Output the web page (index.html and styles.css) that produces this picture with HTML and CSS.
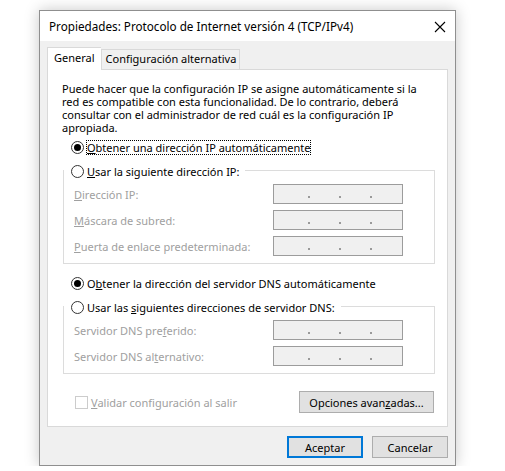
FILE: index.html
```html
<!DOCTYPE html>
<html lang="es">
<head>
    <meta charset="UTF-8">
    <title>Propiedades: Protocolo de Internet versión 4 (TCP/IPv4)</title>
    <link rel="stylesheet" href="styles.css">
</head>
<body>

<div class="window">
    <div class="titlebar">
        <span class="title">Propiedades: Protocolo de Internet versión 4 (TCP/IPv4)</span>
        <svg class="close" width="12" height="12" viewBox="0 0 12 12">
            <path d="M1 1L11 11M11 1L1 11" stroke="#000" stroke-width="1.1" fill="none"/>
        </svg>
    </div>

    <div class="body">
        <div class="tabs">
            <div class="tab active">General</div>
            <div class="tab">Configuración alternativa</div>
        </div>

        <div class="panel">
            <p class="intro">Puede hacer que la configuración IP se asigne automáticamente si la red es compatible con esta funcionalidad. De lo contrario, deberá consultar con el administrador de red cuál es la configuración IP apropiada.</p>

            <div class="option first">
                <span class="radio checked"></span>
                <span class="focus"><u>O</u>btener una dirección IP automáticamente</span>
            </div>

            <div class="group">
                <div class="option group-title">
                    <span class="radio"></span>
                    <span><u>U</u>sar la siguiente dirección IP:</span>
                </div>
                <div class="field-row">
                    <span class="label"><u>D</u>irección IP:</span>
                    <span class="ip"><i></i><i></i><i></i></span>
                </div>
                <div class="field-row">
                    <span class="label"><u>M</u>áscara de subred:</span>
                    <span class="ip"><i></i><i></i><i></i></span>
                </div>
                <div class="field-row">
                    <span class="label"><u>P</u>uerta de enlace predeterminada:</span>
                    <span class="ip"><i></i><i></i><i></i></span>
                </div>
            </div>

            <div class="option dns-auto">
                <span class="radio checked"></span>
                <span>O<u>b</u>tener la dirección del servidor DNS automáticamente</span>
            </div>

            <div class="group">
                <div class="option group-title">
                    <span class="radio"></span>
                    <span>Usar las <u>s</u>iguientes direcciones de servidor DNS:</span>
                </div>
                <div class="field-row">
                    <span class="label">Servidor DNS pre<u>f</u>erido:</span>
                    <span class="ip"><i></i><i></i><i></i></span>
                </div>
                <div class="field-row">
                    <span class="label">Servidor DNS al<u>t</u>ernativo:</span>
                    <span class="ip"><i></i><i></i><i></i></span>
                </div>
            </div>

            <div class="bottom-row">
                <div class="check">
                    <span class="box"></span>
                    <span><u>V</u>alidar configuración al salir</span>
                </div>
                <button class="btn advanced">Opciones avan<u>z</u>adas...</button>
            </div>
        </div>

        <div class="footer">
            <button class="btn default">Aceptar</button>
            <button class="btn">Cancelar</button>
        </div>
    </div>
</div>

</body>
</html>
```

FILE: styles.css
```css
body {
    margin: 0;
    padding: 10px 0 0 39px;
    background-color: #ffffff;
    font-family: "Noto Sans", sans-serif;
    font-size: 11px;
    color: #000000;
}

.window {
    width: 415px;
    height: 454px;
    border: 1px solid #8f8f8f;
    box-shadow: 0 0 14px rgba(0, 0, 0, 0.22);
    background-color: #f0f0f0;
    display: flex;
    flex-direction: column;
}

.titlebar {
    height: 30px;
    background-color: #ffffff;
    display: flex;
    align-items: center;
    justify-content: space-between;
    padding: 0 9px 0 9px;
}

.title {
    font-size: 11.7px;
}

.close {
    margin-top: 1px;
}

.body {
    flex: 1;
    padding: 7px 7px 0 7px;
    display: flex;
    flex-direction: column;
}

.tabs {
    display: flex;
    align-items: flex-end;
    height: 21px;
}

.tab {
    height: 19px;
    line-height: 18px;
    padding: 0 3px 0 4px;
    border: 1px solid #d9d9d9;
    border-bottom: none;
    background-color: #f0f0f0;
}

.tab.active {
    position: relative;
    z-index: 1;
    height: 22px;
    line-height: 20px;
    padding: 0 6px 0 6px;
    margin-bottom: -1px;
    background-color: #ffffff;
    border-right: none;
}

.panel {
    background-color: #ffffff;
    border: 1px solid #d9d9d9;
    padding: 12px 12px 12px 14px;
    height: 358px;
    box-sizing: border-box;
}

.intro {
    margin: 0;
    line-height: 13px;
}

.option {
    display: flex;
    align-items: center;
    height: 16px;
    padding-left: 9px;
}

.option.first {
    margin-top: 5px;
}

.focus {
    outline: 1px dotted #000000;
    outline-offset: 0;
    line-height: 13px;
}

.radio {
    width: 11px;
    height: 11px;
    border: 1px solid #333333;
    border-radius: 50%;
    margin-right: 3px;
    display: flex;
    align-items: center;
    justify-content: center;
    background-color: #ffffff;
}

.radio.checked::after {
    content: "";
    width: 7px;
    height: 7px;
    border-radius: 50%;
    background-color: #000000;
}

.group {
    margin: 15px 0 0 1px;
    border: 1px solid #dcdcdc;
    padding: 0 31px 7px 10px;
}

.group-title {
    margin: -8px 0 5px -10px;
    padding-right: 6px;
    background-color: #ffffff;
    width: max-content;
    padding-left: 7px;
}

.field-row {
    display: flex;
    align-items: center;
    justify-content: space-between;
    height: 20px;
    margin-top: 6px;
}

.group-title + .field-row {
    margin-top: 0;
}

.label {
    color: #a0a0a0;
}

.ip {
    height: 18px;
    border: 1px solid #9c9c9c;
    background-color: #f0f0f0;
    display: flex;
    align-items: center;
    padding-left: 34px;
    gap: 29px;
    box-sizing: content-box;
    width: 94px;
}

.ip i {
    width: 2px;
    height: 2px;
    margin-top: 5px;
    background-color: #9a9a9a;
}

.option.dns-auto {
    margin-top: 11px;
}

.bottom-row {
    margin-top: 17px;
    display: flex;
    align-items: center;
    justify-content: space-between;
    padding-right: 1px;
}

.check {
    display: flex;
    align-items: center;
    color: #a0a0a0;
    padding-left: 13px;
}

.box {
    width: 11px;
    height: 11px;
    border: 1px solid #cccccc;
    margin-right: 3px;
}

.btn {
    font-family: "Noto Sans", sans-serif;
    font-size: 11px;
    color: #000000;
    background-color: #e1e1e1;
    border: 1px solid #adadad;
    height: 22px;
    padding: 0;
    margin: 0;
}

.btn.advanced {
    width: 135px;
}

.footer {
    display: flex;
    justify-content: flex-end;
    gap: 9px;
    padding-top: 9px;
}

.footer .btn {
    width: 76px;
}

.btn.default {
    border-color: #0078d7;
    box-shadow: inset 0 0 0 1px #0078d7;
}
```
